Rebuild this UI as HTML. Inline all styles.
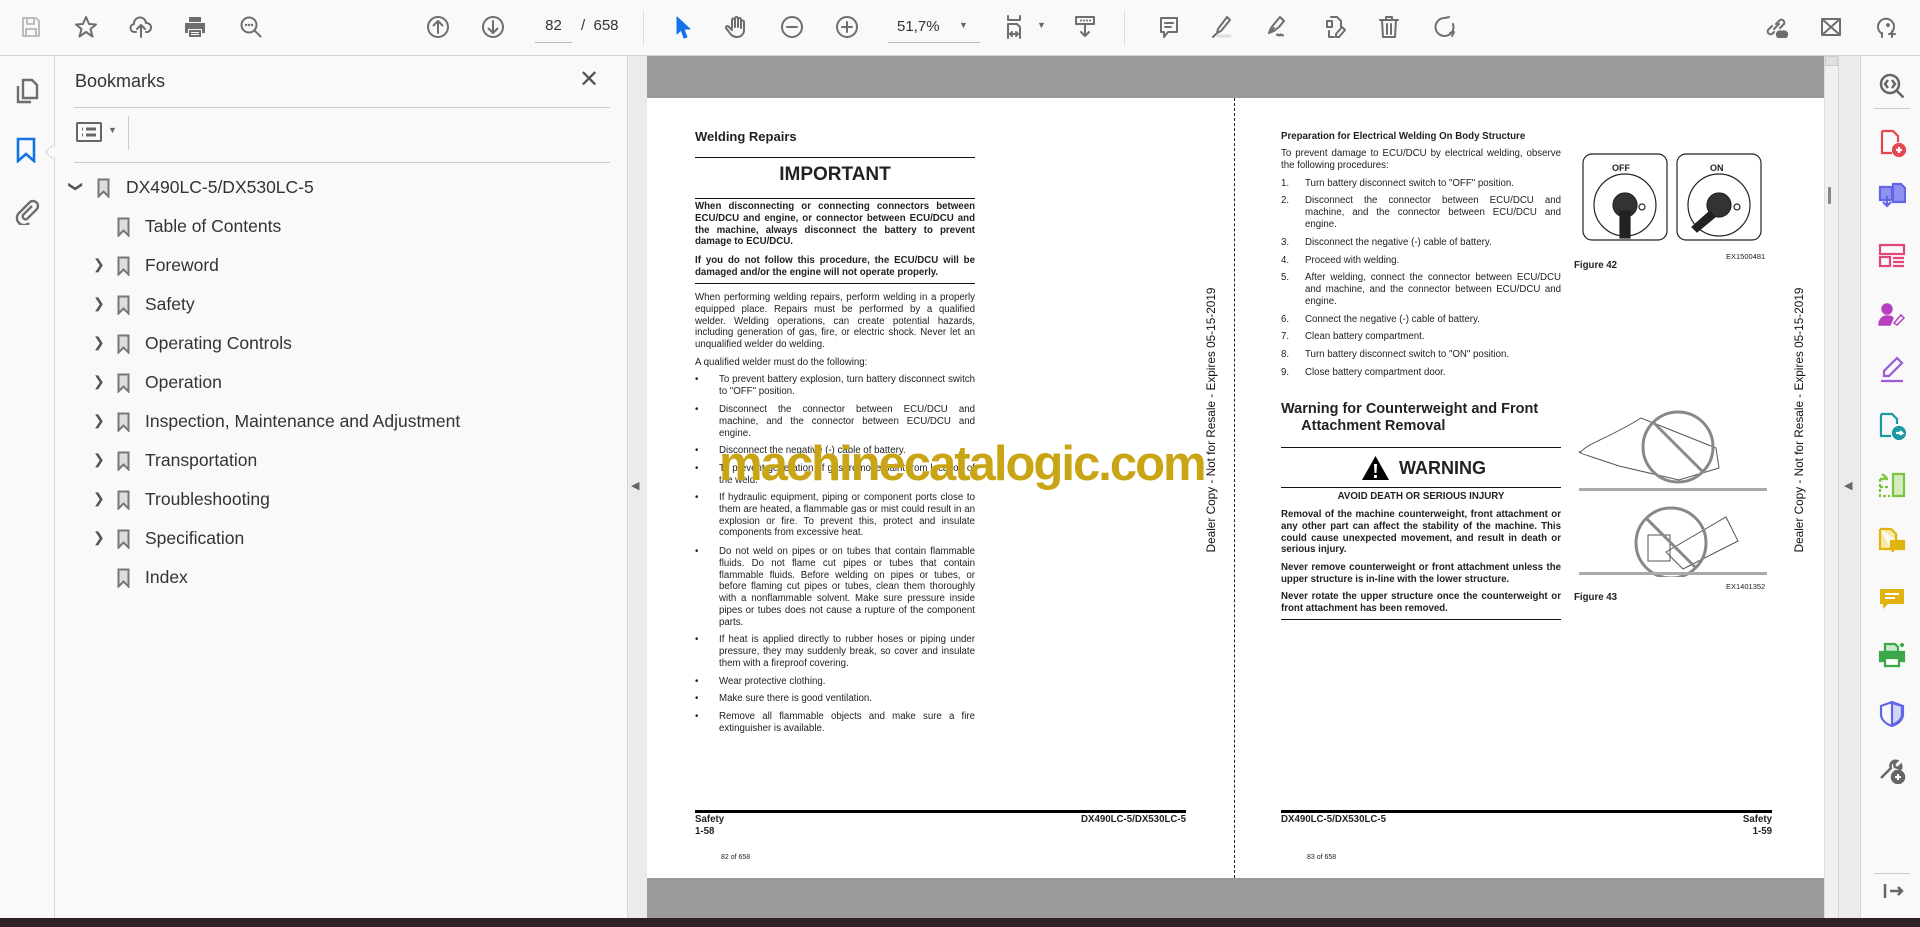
<!DOCTYPE html>
<html><head><meta charset="utf-8"><style>
*{margin:0;padding:0;box-sizing:border-box}
body{width:1920px;height:927px;overflow:hidden;background:#f9f9f9;font-family:"Liberation Sans",Arial,sans-serif;position:relative}
.a{position:absolute}
.tb{left:0;top:0;width:1920px;height:56px;background:#f9f9f9;border-bottom:1px solid #d6d6d6}
.ic{position:absolute;top:15px;width:24px;height:24px}
.ic svg{width:24px;height:24px;fill:none;stroke:#6e6e6e;stroke-width:2;stroke-linecap:round;stroke-linejoin:round}
.bm{position:absolute;font-size:17.5px;color:#333;white-space:nowrap}
.bmi{position:absolute;width:13px;height:20px}
.chev{position:absolute;font-size:14px;color:#555}
.pg{font-size:9.7px;color:#222;line-height:11.8px;text-align:justify}
.pg p{position:absolute}
.b{font-weight:bold}
.hr{position:absolute;height:1px;background:#111}
.rt svg{position:absolute;width:28px;height:28px}
</style></head><body>

<div class="a tb"></div>
<div class="ic" style="left:19px"><svg viewBox="0 0 24 24" style="stroke:#bdbdbd"><path d="M4 3h13l3 3v15H4z M8 3v6h7V3 M7 14h10v7H7z"/></svg></div>
<div class="ic" style="left:74px"><svg viewBox="0 0 24 24"><path d="M12 2l3 7 7 .5-5.5 4.5 2 7.5L12 17l-6.5 4.5 2-7.5L2 9.5 9 9z"/></svg></div>
<div class="ic" style="left:129px"><svg viewBox="0 0 24 24"><path d="M7 17H6a4 4 0 0 1-1-8 6 6 0 0 1 12-1 4.5 4.5 0 0 1 1 9h-1 M12 22V11 M8 14l4-4 4 4"/></svg></div>
<div class="ic" style="left:183px"><svg viewBox="0 0 24 24" style="fill:#6e6e6e;stroke:none"><path d="M6 2h12v5H6z M2 8h20v10h-3v-4H5v4H2z M6 15h12v7H6z" /><path d="M8 17h8v1H8z M8 19h8v1H8z" fill="#f9f9f9"/></svg></div>
<div class="ic" style="left:239px"><svg viewBox="0 0 24 24"><circle cx="10" cy="10" r="7.5"/><path d="M15.5 15.5l6 6"/><path d="M7 10h.1M10 10h.1M13 10h.1" stroke-width="2.4"/></svg></div>
<div class="ic" style="left:426px"><svg viewBox="0 0 24 24"><circle cx="12" cy="12" r="10"/><path d="M12 18V6 M7.5 10.5L12 6l4.5 4.5"/></svg></div>
<div class="ic" style="left:481px"><svg viewBox="0 0 24 24"><circle cx="12" cy="12" r="10"/><path d="M12 6v12 M7.5 13.5L12 18l4.5-4.5"/></svg></div>
<div class="a" style="left:535px;top:17px;width:37px;text-align:center;font-size:15px;color:#333">82</div>
<div class="a" style="left:535px;top:42px;width:37px;height:1px;background:#bbb"></div>
<div class="a" style="left:581px;top:17px;font-size:15px;color:#333">/ &nbsp;658</div>
<div class="a" style="left:643px;top:10px;width:1px;height:36px;background:#ddd"></div>
<div class="ic" style="left:671px"><svg viewBox="0 0 24 24"><path d="M6 2l13 12h-6l3 8-3 1-3-8-4 4z" style="fill:#1473e6;stroke:#1473e6;stroke-width:1"/></svg></div>
<div class="ic" style="left:725px"><svg viewBox="0 0 24 24"><path d="M7 13V5a1.5 1.5 0 0 1 3 0v7V3.5a1.5 1.5 0 0 1 3 0V12V4.5a1.5 1.5 0 0 1 3 0V13V7a1.5 1.5 0 0 1 3 0v8c0 4-3 7-7 7s-6-2-8-5l-3-4a1.5 1.5 0 0 1 2.5-1.5L7 15"/></svg></div>
<div class="ic" style="left:780px"><svg viewBox="0 0 24 24"><circle cx="12" cy="12" r="10"/><path d="M7 12h10"/></svg></div>
<div class="ic" style="left:835px"><svg viewBox="0 0 24 24"><circle cx="12" cy="12" r="10"/><path d="M7 12h10M12 7v10"/></svg></div>
<div class="a" style="left:897px;top:18px;font-size:15px;color:#333">51,7%</div>
<div class="a" style="left:959px;top:20px;font-size:9px;color:#666">▼</div>
<div class="a" style="left:888px;top:42px;width:92px;height:1px;background:#bbb"></div>
<div class="ic" style="left:1004px;width:30px"><svg viewBox="0 0 24 24"><path d="M4 1v4h12V1 M4 23V9h9l3 3v11 M6 19h8 M6 19l2-2M6 19l2 2M14 19l-2-2M14 19l-2 2"/></svg></div>
<div class="a" style="left:1037px;top:20px;font-size:9px;color:#666">▼</div>
<div class="ic" style="left:1073px"><svg viewBox="0 0 24 24"><path d="M3 2h18v7H3z M12 10v11 M8 17l4 4 4-4"/><path d="M8 5.5h.1M11 5.5h.1M14 5.5h.1M17 5.5h.1" stroke-width="2"/></svg></div>
<div class="a" style="left:1124px;top:10px;width:1px;height:36px;background:#ddd"></div>
<div class="ic" style="left:1157px"><svg viewBox="0 0 24 24"><path d="M4 3h16v14h-9l-4 5v-5H4z M8 8h8M8 12h6"/></svg></div>
<div class="ic" style="left:1210px"><svg viewBox="0 0 24 24"><path d="M17 2l3 3-9 11-4 2 1-4z M3 22l3-3"/><path d="M8 21h12" stroke="#ddd" stroke-width="3"/></svg></div>
<div class="ic" style="left:1264px"><svg viewBox="0 0 24 24"><path d="M16 2l4 4-5 6-5 4-5 2 2-5 4-5z M5 18l5-5 M13 20c1-2 2 2 3 0s2 2 3 0"/></svg></div>
<div class="ic" style="left:1323px"><svg viewBox="0 0 24 24"><path d="M8 2h6l4 4v6 M4 6h5v6H4z M6 16v6h5 M19 12l3 3-6 7h-3v-3z"/></svg></div>
<div class="ic" style="left:1377px"><svg viewBox="0 0 24 24"><path d="M3 5h18 M9 5V2h6v3 M5 5l1 17h12l1-17 M10 9v10M14 9v10"/></svg></div>
<div class="ic" style="left:1432px"><svg viewBox="0 0 24 24"><path d="M13 3a9 9 0 1 0 8 6 M13 3l4-1 M20 21l2-4-4 1"/></svg></div>
<div class="ic" style="left:1764px"><svg viewBox="0 0 24 24"><path d="M10 14l5-5 M8 11l-4 4a3 3 0 0 0 4 4l2-2 M16 13l4-4a3 3 0 0 0-4-4l-4 4"/><path d="M14 22h8a3 3 0 0 0-4-5 3 3 0 0 0-4 5" style="fill:#6e6e6e"/></svg></div>
<div class="ic" style="left:1819px"><svg viewBox="0 0 24 24"><path d="M3 4h18v16H3z M3 4l18 16M21 4L3 20"/></svg></div>
<div class="ic" style="left:1874px"><svg viewBox="0 0 24 24"><path d="M7 18a8 8 0 1 1 10 0 M8 18v4 M13 10a1 1 0 1 1 0 .1 M18 16v6M15 19h6"/></svg></div>

<div class="a" style="left:0;top:56px;width:55px;height:862px;background:#f9f9f9;border-right:1px solid #d6d6d6"></div>
<svg class="a" style="left:14px;top:77px" width="26" height="28" viewBox="0 0 26 28" fill="none" stroke="#6e6e6e" stroke-width="2.4"><path d="M9 3h9l5 5v13H9z M4 9v16h13"/></svg>
<svg class="a" style="left:16px;top:137px" width="20" height="26" viewBox="0 0 20 26" fill="none" stroke="#1473e6" stroke-width="2.6"><path d="M2 2h16v22l-8-7-8 7z"/></svg>
<div class="a" style="left:47px;top:147px;width:10px;height:10px;background:#f9f9f9;border-left:1px solid #d6d6d6;border-bottom:1px solid #d6d6d6;transform:rotate(45deg)"></div>
<svg class="a" style="left:12px;top:197px" width="28" height="28" viewBox="0 0 28 28" fill="none" stroke="#6e6e6e" stroke-width="2.4"><path d="M20 9l-9 9a3 3 0 0 0 4 4l10-10a5 5 0 0 0-7-7L7 16a7 7 0 0 0 10 10"/></svg>

<div class="a" style="left:56px;top:56px;width:571px;height:862px;background:#f9f9f9"></div>
<div class="a" style="left:75px;top:71px;font-size:18px;color:#333">Bookmarks</div>
<div class="a" style="left:579px;top:65px;font-size:24px;color:#555">✕</div>
<div class="a" style="left:74px;top:107px;width:536px;height:1px;background:#ccc"></div>
<svg class="a" style="left:76px;top:122px" width="26" height="20" viewBox="0 0 26 20" fill="none" stroke="#666" stroke-width="2"><rect x="1" y="1" width="24" height="18" rx="1"/><path d="M6 7h1M6 13h1M10 7h10M10 13h10" stroke-width="3"/></svg>
<div class="a" style="left:108px;top:125px;font-size:9px;color:#666">▼</div>
<div class="a" style="left:128px;top:116px;width:1px;height:34px;background:#ccc"></div>
<div class="a" style="left:74px;top:162px;width:536px;height:1px;background:#ccc"></div>

<div class="chev" style="left:70px;top:178px;transform:rotate(90deg)">❯</div>
<svg class="bmi" style="left:97px;top:178px" viewBox="0 0 13 20"><path d="M1.5 1.5h10v17l-5-5-5 5z" fill="#ddd" stroke="#777" stroke-width="2"/></svg>
<div class="bm" style="left:126px;top:177px">DX490LC-5/DX530LC-5</div>
<svg class="bmi" style="left:117px;top:217px" viewBox="0 0 13 20"><path d="M1.5 1.5h10v17l-5-5-5 5z" fill="#ddd" stroke="#777" stroke-width="2"/></svg>
<div class="bm" style="left:145px;top:216px">Table of Contents</div>
<div class="chev" style="left:93px;top:256px">❯</div>
<svg class="bmi" style="left:117px;top:256px" viewBox="0 0 13 20"><path d="M1.5 1.5h10v17l-5-5-5 5z" fill="#ddd" stroke="#777" stroke-width="2"/></svg>
<div class="bm" style="left:145px;top:255px">Foreword</div>
<div class="chev" style="left:93px;top:295px">❯</div>
<svg class="bmi" style="left:117px;top:295px" viewBox="0 0 13 20"><path d="M1.5 1.5h10v17l-5-5-5 5z" fill="#ddd" stroke="#777" stroke-width="2"/></svg>
<div class="bm" style="left:145px;top:294px">Safety</div>
<div class="chev" style="left:93px;top:334px">❯</div>
<svg class="bmi" style="left:117px;top:334px" viewBox="0 0 13 20"><path d="M1.5 1.5h10v17l-5-5-5 5z" fill="#ddd" stroke="#777" stroke-width="2"/></svg>
<div class="bm" style="left:145px;top:333px">Operating Controls</div>
<div class="chev" style="left:93px;top:373px">❯</div>
<svg class="bmi" style="left:117px;top:373px" viewBox="0 0 13 20"><path d="M1.5 1.5h10v17l-5-5-5 5z" fill="#ddd" stroke="#777" stroke-width="2"/></svg>
<div class="bm" style="left:145px;top:372px">Operation</div>
<div class="chev" style="left:93px;top:412px">❯</div>
<svg class="bmi" style="left:117px;top:412px" viewBox="0 0 13 20"><path d="M1.5 1.5h10v17l-5-5-5 5z" fill="#ddd" stroke="#777" stroke-width="2"/></svg>
<div class="bm" style="left:145px;top:411px">Inspection, Maintenance and Adjustment</div>
<div class="chev" style="left:93px;top:451px">❯</div>
<svg class="bmi" style="left:117px;top:451px" viewBox="0 0 13 20"><path d="M1.5 1.5h10v17l-5-5-5 5z" fill="#ddd" stroke="#777" stroke-width="2"/></svg>
<div class="bm" style="left:145px;top:450px">Transportation</div>
<div class="chev" style="left:93px;top:490px">❯</div>
<svg class="bmi" style="left:117px;top:490px" viewBox="0 0 13 20"><path d="M1.5 1.5h10v17l-5-5-5 5z" fill="#ddd" stroke="#777" stroke-width="2"/></svg>
<div class="bm" style="left:145px;top:489px">Troubleshooting</div>
<div class="chev" style="left:93px;top:529px">❯</div>
<svg class="bmi" style="left:117px;top:529px" viewBox="0 0 13 20"><path d="M1.5 1.5h10v17l-5-5-5 5z" fill="#ddd" stroke="#777" stroke-width="2"/></svg>
<div class="bm" style="left:145px;top:528px">Specification</div>
<svg class="bmi" style="left:117px;top:568px" viewBox="0 0 13 20"><path d="M1.5 1.5h10v17l-5-5-5 5z" fill="#ddd" stroke="#777" stroke-width="2"/></svg>
<div class="bm" style="left:145px;top:567px">Index</div>

<div class="a" style="left:627px;top:56px;width:20px;height:862px;background:#ebebeb;border-left:1px solid #d6d6d6"></div>
<div class="a" style="left:631px;top:479px;font-size:11px;color:#666">◀</div>

<div class="a" style="left:647px;top:56px;width:1177px;height:862px;background:#9a9a9a"></div>
<div class="a" style="left:647px;top:98px;width:1177px;height:780px;background:#fff"></div>
<div class="a" style="left:1234px;top:98px;width:0;height:780px;border-left:1.5px dashed #222"></div>

<div class="pg">
<p class="b" style="left:695px;top:129px;font-size:13px;line-height:16px">Welding Repairs</p>
<div class="hr" style="left:695px;top:157px;width:280px"></div>
<p class="b" style="left:695px;top:164px;width:280px;text-align:center;font-size:19px;line-height:22px">IMPORTANT</p>
<div class="hr" style="left:695px;top:198px;width:280px"></div>
<p class="b" style="left:695px;top:201px;width:280px">When disconnecting or connecting connectors between ECU/DCU and engine, or connector between ECU/DCU and the machine, always disconnect the battery to prevent damage to ECU/DCU.</p>
<p class="b" style="left:695px;top:255px;width:280px">If you do not follow this procedure, the ECU/DCU will be damaged and/or the engine will not operate properly.</p>
<div class="hr" style="left:695px;top:283px;width:280px"></div>
<p style="left:695px;top:292px;width:280px">When performing welding repairs, perform welding in a properly equipped place. Repairs must be performed by a qualified welder. Welding operations, can create potential hazards, including generation of gas, fire, or electric shock. Never let an unqualified welder do welding.</p>
<p style="left:695px;top:357px">A qualified welder must do the following:</p>
<p style="left:695px;top:374px">•</p><p style="left:719px;top:374px;width:256px">To prevent battery explosion, turn battery disconnect switch to "OFF" position.</p>
<p style="left:695px;top:404px">•</p><p style="left:719px;top:404px;width:256px">Disconnect the connector between ECU/DCU and machine, and the connector between ECU/DCU and engine.</p>
<p style="left:695px;top:445px">•</p><p style="left:719px;top:445px;width:256px">Disconnect the negative (-) cable of battery.</p>
<p style="left:695px;top:463px">•</p><p style="left:719px;top:463px;width:256px">To prevent generation of gas, remove paint from location of the weld.</p>
<p style="left:695px;top:492px">•</p><p style="left:719px;top:492px;width:256px">If hydraulic equipment, piping or component ports close to them are heated, a flammable gas or mist could result in an explosion or fire. To prevent this, protect and insulate components from excessive heat.</p>
<p style="left:695px;top:546px">•</p><p style="left:719px;top:546px;width:256px">Do not weld on pipes or on tubes that contain flammable fluids. Do not flame cut pipes or tubes that contain flammable fluids. Before welding on pipes or tubes, or before flaming cut pipes or tubes, clean them thoroughly with a nonflammable solvent. Make sure pressure inside pipes or tubes does not cause a rupture of the component parts.</p>
<p style="left:695px;top:634px">•</p><p style="left:719px;top:634px;width:256px">If heat is applied directly to rubber hoses or piping under pressure, they may suddenly break, so cover and insulate them with a fireproof covering.</p>
<p style="left:695px;top:676px">•</p><p style="left:719px;top:676px;width:256px">Wear protective clothing.</p>
<p style="left:695px;top:693px">•</p><p style="left:719px;top:693px;width:256px">Make sure there is good ventilation.</p>
<p style="left:695px;top:711px">•</p><p style="left:719px;top:711px;width:256px">Remove all flammable objects and make sure a fire extinguisher is available.</p>

<div class="a" style="left:695px;top:810px;width:491px;height:3px;background:#000"></div>
<p class="b" style="left:695px;top:814px;line-height:12px">Safety<br>1-58</p>
<p class="b" style="left:960px;top:814px;width:226px;text-align:right">DX490LC-5/DX530LC-5</p>
<p style="left:721px;top:852px;font-size:7px">82 of 658</p>

<p class="b" style="left:1281px;top:131px">Preparation for Electrical Welding On Body Structure</p>
<p style="left:1281px;top:148px;width:280px">To prevent damage to ECU/DCU by electrical welding, observe the following procedures:</p>
<p style="left:1281px;top:178px">1.</p><p style="left:1305px;top:178px;width:256px">Turn battery disconnect switch to "OFF" position.</p>
<p style="left:1281px;top:195px">2.</p><p style="left:1305px;top:195px;width:256px">Disconnect the connector between ECU/DCU and machine, and the connector between ECU/DCU and engine.</p>
<p style="left:1281px;top:237px">3.</p><p style="left:1305px;top:237px;width:256px">Disconnect the negative (-) cable of battery.</p>
<p style="left:1281px;top:255px">4.</p><p style="left:1305px;top:255px;width:256px">Proceed with welding.</p>
<p style="left:1281px;top:272px">5.</p><p style="left:1305px;top:272px;width:256px">After welding, connect the connector between ECU/DCU and machine, and the connector between ECU/DCU and engine.</p>
<p style="left:1281px;top:314px">6.</p><p style="left:1305px;top:314px;width:256px">Connect the negative (-) cable of battery.</p>
<p style="left:1281px;top:331px">7.</p><p style="left:1305px;top:331px;width:256px">Clean battery compartment.</p>
<p style="left:1281px;top:349px">8.</p><p style="left:1305px;top:349px;width:256px">Turn battery disconnect switch to "ON" position.</p>
<p style="left:1281px;top:367px">9.</p><p style="left:1305px;top:367px;width:256px">Close battery compartment door.</p>
<p class="b" style="left:1281px;top:401px;font-size:14.5px;line-height:17px;text-align:left">Warning for Counterweight and Front<br>&nbsp;&nbsp;&nbsp;&nbsp;&nbsp;Attachment Removal</p>
<div class="hr" style="left:1281px;top:447px;width:280px"></div>
<svg class="a" style="left:1361px;top:455px" width="29" height="26" viewBox="0 0 29 26"><path d="M14.5 1L28 25H1z" fill="#000"/><path d="M13 9h3l-.5 9h-2z M13 20h3v3h-3z" fill="#fff"/></svg>
<p class="b" style="left:1399px;top:456px;font-size:18px;line-height:24px">WARNING</p>
<div class="hr" style="left:1281px;top:487px;width:280px"></div>
<p class="b" style="left:1281px;top:491px;width:280px;text-align:center">AVOID DEATH OR SERIOUS INJURY</p>
<p class="b" style="left:1281px;top:509px;width:280px">Removal of the machine counterweight, front attachment or any other part can affect the stability of the machine. This could cause unexpected movement, and result in death or serious injury.</p>
<p class="b" style="left:1281px;top:562px;width:280px">Never remove counterweight or front attachment unless the upper structure is in-line with the lower structure.</p>
<p class="b" style="left:1281px;top:591px;width:280px">Never rotate the upper structure once the counterweight or front attachment has been removed.</p>
<div class="hr" style="left:1281px;top:619px;width:280px"></div>

<svg class="a" style="left:1582px;top:153px" width="182" height="88" viewBox="0 0 182 88" fill="none" stroke="#222" stroke-width="1.2">
<rect x="1" y="1" width="84" height="86" rx="9"/><rect x="95" y="1" width="84" height="86" rx="9"/>
<circle cx="43" cy="52" r="31"/><circle cx="137" cy="52" r="31"/>
<circle cx="43" cy="52" r="12" fill="#333"/><circle cx="137" cy="52" r="12" fill="#333"/>
<rect x="38" y="58" width="10" height="27" fill="#222"/>
<path d="M128 58l-18 16 5 5 18-15z" fill="#222"/>
<circle cx="60" cy="54" r="3"/><circle cx="155" cy="54" r="3"/>
<text x="30" y="18" font-size="9" font-weight="bold" fill="#222" stroke="none" font-family="Liberation Sans">OFF</text>
<text x="128" y="18" font-size="9" font-weight="bold" fill="#222" stroke="none" font-family="Liberation Sans">ON</text>
</svg>
<p style="left:1726px;top:251px;font-size:7.5px">EX1500481</p>
<p class="b" style="left:1574px;top:260px">Figure 42</p>

<svg class="a" style="left:1578px;top:407px" width="195" height="170" viewBox="0 0 195 170" fill="none" stroke="#555" stroke-width="1">
<path d="M3 45c5-8 30-15 60-34l30 12 45 18 3 20-40 12-60-14-30-10c-10-3-12-5-8-4z"/>
<circle cx="100" cy="40" r="35" stroke="#888" stroke-width="3"/><path d="M75 15l50 50" stroke="#888" stroke-width="3"/>
<rect x="1" y="81" width="188" height="3" fill="#aaa" stroke="none"/>
<path d="M88 145l60-35 12 24-55 28z M70 128h22v26H70z"/>
<circle cx="93" cy="136" r="35" stroke="#888" stroke-width="3"/><path d="M68 111l50 50" stroke="#888" stroke-width="3"/>
<rect x="1" y="165" width="188" height="3" fill="#aaa" stroke="none"/>
</svg>
<p style="left:1726px;top:581px;font-size:7.5px">EX1401352</p>
<p class="b" style="left:1574px;top:592px">Figure 43</p>

<div class="a" style="left:1281px;top:810px;width:491px;height:3px;background:#000"></div>
<p class="b" style="left:1281px;top:814px">DX490LC-5/DX530LC-5</p>
<p class="b" style="left:1672px;top:814px;width:100px;text-align:right;line-height:12px">Safety<br>1-59</p>
<p style="left:1307px;top:852px;font-size:7px">83 of 658</p>
</div>

<div class="a" style="left:1211px;top:420px;width:0;height:0"><div style="position:absolute;transform:translate(-50%,-50%) rotate(-90deg);white-space:nowrap;font-size:11.8px;color:#111">Dealer Copy - Not for Resale - Expires 05-15-2019</div></div>
<div class="a" style="left:1799px;top:420px;width:0;height:0"><div style="position:absolute;transform:translate(-50%,-50%) rotate(-90deg);white-space:nowrap;font-size:11.8px;color:#111">Dealer Copy - Not for Resale - Expires 05-15-2019</div></div>

<div class="a" style="left:719px;top:436px;font-size:49px;font-weight:bold;color:#c9a414;letter-spacing:-2px;white-space:nowrap">machinecatalogic.com</div>

<div class="a" style="left:1824px;top:56px;width:14px;height:862px;background:#f0f0f0;border-left:1px solid #ddd"></div>
<div class="a" style="left:1825px;top:56px;width:13px;height:10px;background:#e0e0e0;border:1px solid #ccc"></div>
<div class="a" style="left:1828px;top:187px;width:3px;height:17px;background:#888;border-radius:1px"></div>
<div class="a" style="left:1838px;top:56px;width:23px;height:862px;background:#ebebeb;border-left:1px solid #d6d6d6;border-right:1px solid #d6d6d6"></div>
<div class="a" style="left:1844px;top:479px;font-size:11px;color:#666">◀</div>
<div class="a" style="left:1862px;top:56px;width:58px;height:862px;background:#f9f9f9"></div>
<div class="a" style="left:1874px;top:108px;width:36px;height:1px;background:#ccc"></div>
<div class="a" style="left:1874px;top:873px;width:36px;height:1px;background:#ccc"></div>
<div class="rt">
<svg style="left:1878px;top:72px" viewBox="0 0 28 28" fill="none" stroke="#666" stroke-width="2.5"><circle cx="12" cy="12" r="9"/><path d="M18.5 18.5l7 7 M10 8l-3 4 3 4M14 8l3 4-3 4"/></svg>
<svg style="left:1878px;top:129px" viewBox="0 0 28 28" fill="none" stroke="#e34850" stroke-width="2.2"><path d="M4 2h11l5 5v6 M4 2v22h10"/><circle cx="21" cy="21" r="6" fill="#e34850"/><path d="M18 21h6M21 18v6" stroke="#fff"/></svg>
<svg style="left:1878px;top:182px" viewBox="0 0 28 28" fill="none" stroke="#6166e6" stroke-width="2.2"><path d="M2 5h12v13H2z M15 2h8l4 4v14H15z" fill="#8e92f0"/><path d="M9 14v10M5 20l4 4 4-4"/></svg>
<svg style="left:1878px;top:242px" viewBox="0 0 28 28" fill="none" stroke="#e0457b" stroke-width="2.2"><rect x="2" y="3" width="24" height="9"/><rect x="2" y="15" width="10" height="9"/><path d="M15 16h11M15 20h11M15 24h11"/></svg>
<svg style="left:1878px;top:301px" viewBox="0 0 28 28" fill="#b83fbf" stroke="#b83fbf" stroke-width="1.5"><circle cx="9" cy="8" r="5"/><path d="M1 24c0-6 4-9 8-9s5 1 6 2l-3 7z"/><path d="M16 22l7-8 3 3-7 7z" fill="none"/></svg>
<svg style="left:1878px;top:356px" viewBox="0 0 28 28" fill="none" stroke="#9b5ad9" stroke-width="2.2"><path d="M19 2l5 5-13 13H6v-5z M3 25h22"/></svg>
<svg style="left:1878px;top:412px" viewBox="0 0 28 28" fill="none" stroke="#1b9aa3" stroke-width="2.2"><path d="M3 2h11l5 5v5 M3 2v22h10"/><circle cx="21" cy="21" r="6" fill="#1b9aa3"/><path d="M18 21h6l-2-2M24 21l-2 2" stroke="#fff"/></svg>
<svg style="left:1878px;top:471px" viewBox="0 0 28 28" fill="none" stroke="#7cc33f" stroke-width="2.2"><path d="M15 3h11v22H15z" fill="#d5ecbf"/><path d="M2 8h9M2 8v17h10M2 16h9" stroke-dasharray="3 2"/><path d="M4 3l4 3-4 3"/></svg>
<svg style="left:1878px;top:526px" viewBox="0 0 28 28" fill="none" stroke="#e0b30f" stroke-width="2.2"><path d="M2 3h11l5 5v6 M2 3v20h11" fill="#f7e9a9"/><rect x="13" y="15" width="13" height="8" fill="#e0b30f"/><path d="M16 23l-2 3"/></svg>
<svg style="left:1878px;top:584px" viewBox="0 0 28 28" fill="#e0b30f"><path d="M2 5h24v15H10l-5 5v-5H2z"/><path d="M7 10h14M7 14h10" stroke="#fff" stroke-width="2"/></svg>
<svg style="left:1878px;top:641px" viewBox="0 0 28 28" fill="none" stroke="#3ba94a" stroke-width="2.2"><path d="M7 3h10l3 3v5H7z" fill="#c8ebc9"/><path d="M2 11h24v9H2z" fill="#3ba94a"/><path d="M7 17h14v8H7z" fill="#fff"/><path d="M24 2v4M22 4h4"/></svg>
<svg style="left:1878px;top:700px" viewBox="0 0 28 28" fill="none" stroke="#6166e6" stroke-width="2.2"><path d="M14 2l11 4v8c0 6-5 10-11 12C8 24 3 20 3 14V6z"/><path d="M14 3v22c5-2 10-5 10-11V6z" fill="#d3d4fa"/></svg>
<svg style="left:1878px;top:756px" viewBox="0 0 28 28" fill="none" stroke="#666" stroke-width="2.5"><path d="M3 22l10-10a5 5 0 0 1 6-7l-3 3 1 3 3 1 3-3a5 5 0 0 1-7 6"/><circle cx="20" cy="21" r="6" fill="#666"/><path d="M17 21h6M20 18v6" stroke="#fff" stroke-width="2"/></svg>
<svg style="left:1878px;top:877px" viewBox="0 0 28 28" fill="none" stroke="#666" stroke-width="2.5"><path d="M7 7v14 M12 14h12 M20 10l4 4-4 4"/></svg>
</div>

<div class="a" style="left:0;top:918px;width:1920px;height:9px;background:#2e2227"></div>
</body></html>
